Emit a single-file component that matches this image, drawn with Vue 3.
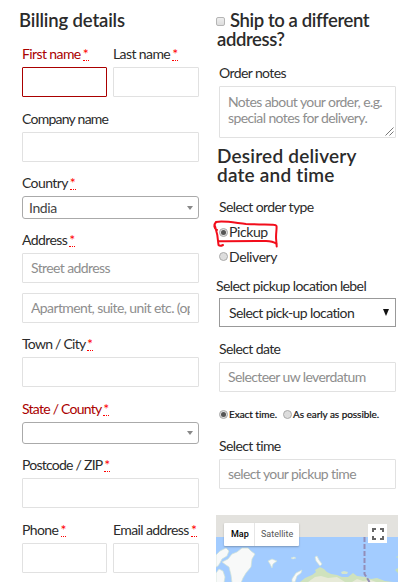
<script setup>
const rows = [
  { fields: [{ label: 'First name', required: true, invalid: true, box: 'error' }, { label: 'Last name', required: true }] },
  { fields: [{ label: 'Company name', tight: true }] },
  { fields: [{ label: 'Country', required: true, select: true, value: 'India' }] },
  { fields: [{ label: 'Address', required: true, hint: 'Street address', second: 'Apartment, suite, unit etc. (optional)' }] },
  { fields: [{ label: 'Town / City', required: true, tight: true }] },
  { fields: [{ label: 'State / County', required: true, invalid: true, tight: true, select: true, value: '', short: true }] },
  { fields: [{ label: 'Postcode / ZIP', required: true, tight: true }] },
  { fields: [{ label: 'Phone', required: true }, { label: 'Email address', required: true }] },
]
</script>

<template>
  <main class="page">
    <section class="billing">
      <h3 class="title">Billing details</h3>
      <div v-for="(row, i) in rows" :key="i" class="row">
        <div v-for="f in row.fields" :key="f.label" class="field">
          <div class="label" :class="{ invalid: f.invalid, tight: f.tight }">{{ f.label }}<template v-if="f.required">&nbsp;<abbr class="req">*</abbr></template></div>
          <div v-if="f.select" class="select" :class="{ short: f.short }"><span>{{ f.value }}</span><i class="caret"></i></div>
          <div v-else class="input" :class="f.box"><span class="clip">{{ f.hint }}</span></div>
          <div v-if="f.second" class="input second"><span class="clip">{{ f.second }}</span></div>
        </div>
      </div>
    </section>

    <section class="order">
      <h3 class="title ship"><i class="check"></i>Ship to a different<br>address?</h3>
      <div class="label">Order notes</div>
      <div class="input notes">Notes about your order, e.g.<br>special notes for delivery.
        <svg class="grip" width="9" height="9" viewBox="0 0 9 9"><path d="M.5 8.5l8-8M4.500 8.500l4-4" /></svg>
      </div>
      <h3 class="title desired">Desired delivery<br>date and time</h3>
      <div class="label type">Select order type</div>
      <div class="option picked"><i class="radio on"></i><span>Pickup</span>
        <svg class="marker" width="68" height="30" viewBox="0 0 68 30">
          <path d="M5 10C2 9 1.500 5 4 2C12 .5 24 3 34 4C46 4.500 54 4.500 60 4.700Q64 4.500 64.500 6C65 10 63.500 14 64.200 20L64.700 26.500M3 6C5 12 6 16 6.500 25Q8 26.500 11 25M6.700 21.300C22 21 40 21 54 21C59 21 62 22 64.700 24" />
        </svg>
      </div>
      <div class="option"><i class="radio"></i><span>Delivery</span></div>
      <div class="label pickup">Select pickup location lebel</div>
      <div class="native"><span>Select pick-up location</span><i class="arrow"></i></div>
      <div class="label date">Select date</div>
      <div class="input">Selecteer uw leverdatum</div>
      <div class="times"><i class="radio on"></i><span class="exact">Exact time.</span><i class="radio"></i><span class="early">As early as possible.</span></div>
      <div class="label">Select time</div>
      <div class="input">select your pickup time</div>
      <div class="map">
        <svg class="land" width="182" height="67" viewBox="0 0 182 67">
          <rect width="182" height="67" fill="#e3e2de" />
          <rect y="22" width="182" height="45" fill="#a3ccff" />
          <g fill="#f8f9f9" stroke="#d0e3d6" stroke-width=".7">
            <path d="M0 40l4-4 6-3 3 3-2 5-5 3-2 4-2 3-2 1z" />
            <path d="M6 47l6-3 4-5 5-2 5-4 6 0 3 3 4 3-3 5-1 8-5 6-3 5-2 5H16l-1-8-2-8-3-2z" />
            <path d="M0 58l3-4 4 2 2 6-1 6H0z" />
            <path d="M52 46l4-2 5 2-4 3-1 4-2-4zM75 43l3-1 2 1-3 1zM99 42l2-1 2 4 3 4-2 2-4-5z" />
            <path d="M86 55l-6 3-4 6v3h3l2-6 4-3z" />
          </g>
          <path d="M84 67l5-4 7-3 4-3-1-2 5-3 4 2 3 3 4 2 6 1 5 2 6 0 5-4 4 3 8 1 6 2 6-1 8 3 8 1z" fill="#cfe2bd" />
          <path d="M92 67l7-5 6-1 7 2 9-1 8 5zM136 67l5-3 6 2 8-1 5 2z" fill="#e7ead8" />
          <path d="M125 57l3-1 4 1-1 2-5 0z" fill="#d5e5cc" />
          <path d="M148.500 22v37l5 8" fill="none" stroke="#938db8" stroke-width="2" stroke-dasharray="5 2" />
          <path d="M179 55l3-2v5zM180 42l2-1v2z" fill="#c5dfb7" />
        </svg>
        <div class="tabs"><b>Map</b><span>Satellite</span></div>
        <div class="full"><svg width="12" height="12" viewBox="0 0 12 12"><path d="M1 4V1h3M8 1h3v3M11 8v3H8M4 11H1V8" /></svg></div>
      </div>
    </section>
  </main>
</template>

<style>
body { margin: 0; background: #fff; overflow: hidden; }
</style>

<style scoped>
* { box-sizing: border-box; }
.page { display: flex; width: 412px; height: 582px; overflow: hidden; font: 14px/20px Lato, "Liberation Sans", sans-serif; letter-spacing: -.6px; color: #2b2b2b; white-space: nowrap; }
.billing { flex: none; width: 199px; padding-left: 22px; display: grid; grid-template-columns: minmax(0, 1fr); grid-template-rows: 37px 60px 65px 57px 104px 64px 57px 64px 65px; }
.title { margin: 0; font-size: 18.5px; line-height: 19px; font-weight: 600; letter-spacing: -.15px; }
.billing .title { margin-left: -3px; padding-top: 11px; }
.row { display: flex; gap: 6px; align-items: flex-end; }
.field { flex: 1; min-width: 0; }
.row .field:first-child:nth-last-child(2) { flex: 0 0 85px; }
.label { height: 20px; margin-bottom: 3px; }
.tight { letter-spacing: -.75px; }
.invalid { color: #a00; }
.req { color: red; display: inline-block; height: 17px; line-height: 20px; border-bottom: 1px dotted red; text-decoration: none; letter-spacing: 0; margin-left: -.8px; }
.input { height: 30px; border: 1px solid #e1e1e1; border-radius: 1px; padding: 0 8px; line-height: 28px; color: #8e8e8e; }
.clip { display: block; overflow: hidden; height: 28px; }
.error { border-color: #a00; }
.second { margin-top: 10px; }
.select { height: 23px; border: 1px solid #aaa; border-radius: 3px; display: flex; justify-content: space-between; align-items: center; padding: 0 5px 0 6px; line-height: 21px; color: #444; }
.select span { letter-spacing: -.4px; }
.select.short { height: 22px; }
.caret { border: 3px solid transparent; border-top: 4px solid #888; border-bottom: 0; }
.order { flex: none; width: 182px; margin-left: 17px; display: flex; flex-direction: column; }
.ship { padding: 11px 0 0 1px; margin-bottom: 14px; letter-spacing: -.4px; }
.check { display: inline-block; width: 9px; height: 9px; border: 1px solid #b5b5b5; border-radius: 2px; background: linear-gradient(#eee, #ddd); margin: 0 5px 0 -1px; vertical-align: 1px; }
.order > .label, .order > .input, .native { margin-left: 3px; width: 177px; flex: none; }
.notes { position: relative; height: 52px; padding: 7px 8px; line-height: 16px; }
.grip { position: absolute; right: 1px; bottom: 1px; fill: none; stroke: #555; stroke-width: .8; }
.desired { padding: 8px 0 0 1px; font-size: 19px; letter-spacing: .2px; }
.order > .type { margin-top: 13px; margin-bottom: 3px; }
.option { position: relative; height: 25px; padding-left: 3px; display: flex; align-items: center; letter-spacing: -.4px; }
.radio { flex: none; width: 9px; height: 9px; border: 1px solid #aaa; border-radius: 50%; background: #ddd; display: flex; align-items: center; justify-content: center; margin-right: 1px; }
.on::after { content: ""; width: 5px; height: 5px; border-radius: 50%; background: #555; }
.marker { position: absolute; left: -4px; top: 0; fill: none; stroke: #f20d1b; stroke-width: 2; stroke-linecap: round; stroke-linejoin: round; }
.order > .pickup { margin: 7px 0 2px; }
.native { height: 29px; border: 1px solid #999; display: flex; justify-content: space-between; align-items: center; padding: 0 6px 3px 9px; line-height: 24px; }
.native { padding-bottom: 0; }
.arrow { border: 3px solid transparent; border-top: 7px solid #111; border-bottom: 0; }
.order > .date { margin-top: 12px; }
.times { height: 20px; margin: 12px 0 12px 3px; display: flex; align-items: center; font-size: 10px; letter-spacing: -.05px; color: #111; -webkit-text-stroke: .2px #111; }
.exact { width: 54px; }
.map { position: relative; margin-top: 26px; height: 67px; flex: none; font: 9px/22px Roboto, sans-serif; letter-spacing: 0; }
.land { display: block; }
.tabs { position: absolute; left: 8px; top: 8px; display: flex; height: 23px; background: #fff; border-radius: 1px; box-shadow: 0 1px 2px #0004; }
.tabs b { width: 31px; padding-left: 7px; font-weight: 500; color: #000; border-right: 1px solid #e6e6e6; }
.tabs span { width: 44px; padding-left: 6px; color: #565656; }
.full { position: absolute; left: 152px; top: 9px; width: 19px; height: 19px; background: #fff; display: flex; align-items: center; justify-content: center; }
.full path { fill: none; stroke: #666; stroke-width: 2; }
</style>
